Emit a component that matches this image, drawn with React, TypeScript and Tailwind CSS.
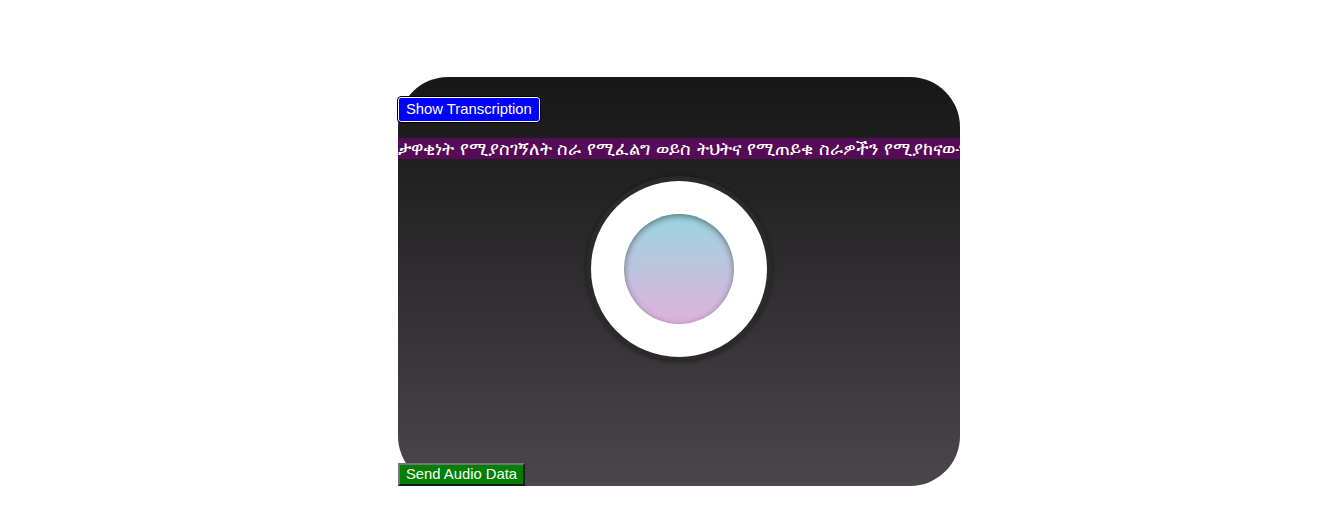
import React from "react";

export default function App() {
  return (
    <div className="w-[1336px] h-[526px] bg-white overflow-hidden" style={{ fontFamily: '"Liberation Sans", Arial, sans-serif' }}>
      <div className="ml-[398px] mt-[77px] w-[562px] h-[409px] rounded-[50px] bg-gradient-to-b from-[#171717] to-[#4b464b] flex flex-col relative">
        <div className="pt-[20px]">
          <button className="h-[25px] px-[7px] bg-[#0000ff] text-white text-[14.8px] leading-[19px] rounded-[3px] border border-white outline outline-1 outline-black">
            Show Transcription
          </button>
        </div>
        <div className="mt-[16px] h-[21px] bg-[#550b55] overflow-hidden whitespace-nowrap">
          <span className="text-white text-[18px] leading-[21px]" style={{ fontFamily: '"DejaVu Sans", sans-serif' }}>
            ታዋቂነት የሚያስገኝለት ስራ የሚፈልግ ወይስ ትህትና የሚጠይቁ ስራዎችን የሚያከናውን
          </span>
        </div>
        <div className="flex justify-center mt-[17px]">
          <div className="w-[186px] h-[186px] rounded-full bg-[#2a2a2a] flex items-center justify-center shadow-[0_0_4px_rgba(0,0,0,0.4)]">
            <div className="w-[176px] h-[176px] rounded-full bg-white flex items-center justify-center">
              <div className="w-[110px] h-[110px] rounded-full bg-gradient-to-b from-[#98d4e0] to-[#ddb1dc] shadow-[inset_0_2px_6px_rgba(0,0,0,0.45)]" />
            </div>
          </div>
        </div>
        <div className="mt-auto">
          <button className="h-[23px] px-[6px] bg-[#008000] text-white text-[14.8px] leading-[19px] border-2 border-t-[#767676] border-l-[#767676] border-r-[#1a1a1a] border-b-[#1a1a1a]">
            Send Audio Data
          </button>
        </div>
      </div>
    </div>
  );
}
